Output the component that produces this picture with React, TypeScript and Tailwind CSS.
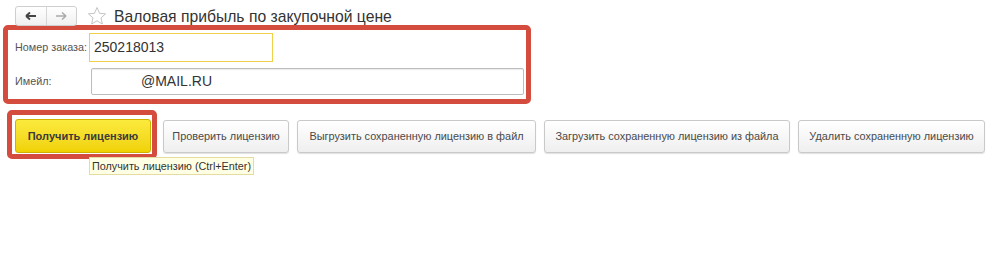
import React from "react";

function GrayButton({ children, w }: { children: React.ReactNode; w: string }) {
  return (
    <div
      className={`${w} h-[33px] flex items-center justify-center rounded-[3px] border border-[#c9c9c9] bg-gradient-to-b from-[#ffffff] to-[#efefef] shadow-[0_1px_1px_rgba(0,0,0,0.12)] text-[10.9px] text-[#4a4a4a] whitespace-nowrap`}
    >
      {children}
    </div>
  );
}

export default function App() {
  return (
    <div
      className="relative w-[988px] h-[255px] bg-white overflow-hidden"
      style={{ fontFamily: '"Liberation Sans", Arial, sans-serif' }}
    >
      {/* Header */}
      <div className="flex items-start h-[25px] pt-[6px] pl-[15px]">
        <div className="flex h-[20px] w-[62px] rounded-[3px] border border-[#cfcfcf] bg-gradient-to-b from-white to-[#f0f0f0]">
          <div className="flex-1 flex items-center justify-center border-r border-[#d6d6d6]">
            <svg width="12" height="10" viewBox="0 0 12 10">
              <path d="M1 5 L11 5 M1 5 L5 1.5 M1 5 L5 8.5" stroke="#444" strokeWidth="1.8" fill="none" />
            </svg>
          </div>
          <div className="flex-1 flex items-center justify-center">
            <svg width="12" height="10" viewBox="0 0 12 10">
              <path d="M1 5 L11 5 M11 5 L7 1.5 M11 5 L7 8.5" stroke="#aaa" strokeWidth="1.6" fill="none" />
            </svg>
          </div>
        </div>
        <div className="ml-[10px] mt-[0px]">
          <svg width="20" height="20" viewBox="0 0 20 20">
            <path
              d="M10 1.5 L12.5 7.3 L18.6 7.8 L14 11.9 L15.4 18 L10 14.8 L4.6 18 L6 11.9 L1.4 7.8 L7.5 7.3 Z"
              fill="none"
              stroke="#c4c4c4"
              strokeWidth="1"
            />
          </svg>
        </div>
        <div className="ml-[7px] mt-[1px] text-[15.7px] leading-[20px] text-[#333] whitespace-nowrap">
          Валовая прибыль по закупочной цене
        </div>
      </div>

      {/* Form box */}
      <div className="ml-[3px] w-[528px] h-[79px] border-[5px] border-[#d44c3e] rounded-[5px] pl-[7px] pt-[3px]">
        <div className="flex items-center">
          <div className="w-[74px] text-[10.8px] text-[#555] whitespace-nowrap">Номер заказа:</div>
          <div className="w-[184px] h-[29px] border border-[#f0cf4a] flex items-center pl-[4px] text-[14px] text-[#333]">
            250218013
          </div>
        </div>
        <div className="flex items-center mt-[6px]">
          <div className="w-[76px] text-[10.8px] text-[#555] whitespace-nowrap">Имейл:</div>
          <div className="w-[433px] h-[27px] border border-[#bdbdbd] rounded-[2px] shadow-[inset_0_1px_1px_rgba(0,0,0,0.08)] flex items-center pl-[49px] text-[14px] text-[#333]">
            @MAIL.RU
          </div>
        </div>
      </div>

      {/* Buttons */}
      <div className="flex items-start mt-[6px]">
        <div className="ml-[7px] w-[150px] h-[49px] border-[5px] border-[#d44c3e] rounded-[5px] pl-[3px] pt-[4px]">
          <div className="w-[136px] h-[34px] flex items-center justify-center rounded-[3px] border border-[#cfb000] bg-gradient-to-b from-[#fbea3c] to-[#f0d200] text-[11px] font-bold text-[#3a3a3a] whitespace-nowrap">
            Получить лицензию
          </div>
        </div>
        <div className="flex gap-[8px] ml-[6px] mt-[10px]">
          <GrayButton w="w-[126px]">Проверить лицензию</GrayButton>
          <GrayButton w="w-[239px]">Выгрузить сохраненную лицензию в файл</GrayButton>
          <GrayButton w="w-[246px]">Загрузить сохраненную лицензию из файла</GrayButton>
          <GrayButton w="w-[187px]">Удалить сохраненную лицензию</GrayButton>
        </div>
      </div>

      {/* Tooltip */}
      <div className="absolute left-[89px] top-[157px] h-[18px] px-[2px] flex items-center border border-[#e4dca0] bg-[#ffffe4] text-[10.8px] text-[#333] whitespace-nowrap">
        Получить лицензию (Ctrl+Enter)
      </div>
    </div>
  );
}
